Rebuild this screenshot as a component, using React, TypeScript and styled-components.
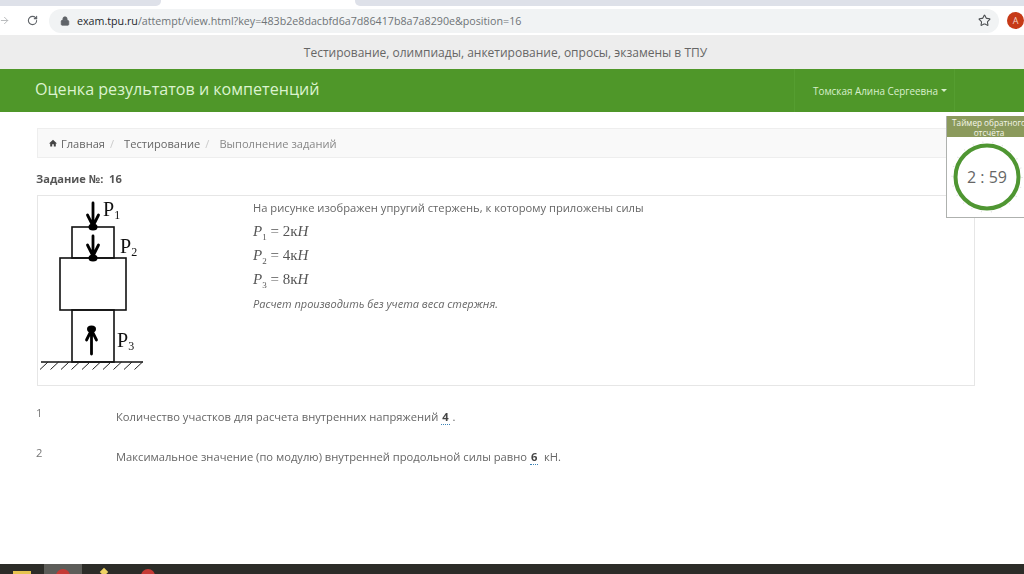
import styled, { createGlobalStyle } from 'styled-components';
import { ArrowRight, RotateCw, Lock, Star } from 'lucide-react';

const GlobalStyle = createGlobalStyle`
    html, body {
        margin: 0;
        padding: 0;
        background: #fff;
    }
    body {
        font-family: "Open Sans", "Liberation Sans", sans-serif;
        color: #555;
    }
`;

function Diagram() {
    const hatch = [];
    for (let x = 48; x <= 146; x += 10.5) {
        hatch.push(<line key={x} x1={x} y1={362} x2={x - 8} y2={369.500} stroke="#222" strokeWidth="1" />);
    }
    return (
        <DiagramSvg width="216" height="189" viewBox="37 196 216 189" fill="none">
            <g stroke="#111" strokeWidth="1.6">
                <rect x="72" y="227" width="42" height="31" />
                <rect x="60" y="258" width="66" height="52" />
                <rect x="72" y="310" width="42" height="52" />
                <line x1="41" y1="362" x2="143" y2="362" />
            </g>
            {hatch}
            <g stroke="#000" strokeWidth="2.800" strokeLinecap="round">
                <path d="M93 203V226M87.500 215L93 226L98.500 215" />
                <path d="M93 236V256M87.500 245L93 256L98.500 245" />
                <path d="M91.500 354V330M86.500 340L91.500 330L96.500 340" />
            </g>
            <g fill="#000">
                <ellipse cx="93" cy="227" rx="4.500" ry="3.500" />
                <ellipse cx="93" cy="258" rx="4.500" ry="3.500" />
                <ellipse cx="91.500" cy="329" rx="4.500" ry="3.500" />
            </g>
            <DiagramLabel x="103" y="216">P<tspan fontSize="12" dy="3">1</tspan></DiagramLabel>
            <DiagramLabel x="120" y="253">P<tspan fontSize="12" dy="3">2</tspan></DiagramLabel>
            <DiagramLabel x="117" y="347">P<tspan fontSize="12" dy="3">3</tspan></DiagramLabel>
        </DiagramSvg>
    );
}

function Formula({ n, value }: { n: number; value: number }) {
    return (
        <FormulaLine>
            <i>P</i><sub>{n}</sub> = {value}к<i>H</i>
        </FormulaLine>
    );
}

function App() {
    return (
        <Page>
            <GlobalStyle />
            <TabStrip>
                <Tab />
                <ActiveTab />
                <Tab $grow />
            </TabStrip>
            <Toolbar>
                <ForwardIcon size={15} />
                <ReloadIcon size={15} strokeWidth={2.4} />
                <AddressBar>
                    <Lock size={10} fill="#5f6368" color="#5f6368" />
                    <Url><b>exam.tpu.ru</b>/attempt/view.html?key=483b2e8dacbfd6a7d86417b8a7a8290e&position=16</Url>
                    <StarIcon size={13} />
                </AddressBar>
                <Avatar>A</Avatar>
            </Toolbar>
            <Banner>Тестирование, олимпиады, анкетирование, опросы, экзамены в ТПУ</Banner>
            <Navbar>
                <Brand>Оценка результатов и компетенций</Brand>
                <UserMenu>Томская Алина Сергеевна<Caret /></UserMenu>
            </Navbar>
            <Content>
                <Breadcrumb>
                    <HomeIcon viewBox="0 0 10 10"><path d="M5 1L0 5.500H1.500V9.500H4V6.500H6V9.500H8.500V5.500H10Z" /></HomeIcon>
                    <Crumb>Главная</Crumb>
                    <Sep>/</Sep>
                    <Crumb>Тестирование</Crumb>
                    <Sep>/</Sep>
                    <Crumb $active>Выполнение заданий</Crumb>
                </Breadcrumb>
                <TaskTitle>Задание №:&nbsp; 16</TaskTitle>
                <TaskPanel>
                    <Diagram />
                    <TaskText>
                        <Line>На рисунке изображен упругий стержень, к которому приложены силы</Line>
                        <Formula n={1} value={2} />
                        <Formula n={2} value={4} />
                        <Formula n={3} value={8} />
                        <Note>Расчет производить без учета веса стержня.</Note>
                    </TaskText>
                </TaskPanel>
                <Answers>
                    <AnswerRow>
                        <AnswerNum>1</AnswerNum>
                        <AnswerText>Количество участков для расчета внутренних напряжений <Value>4</Value> .</AnswerText>
                    </AnswerRow>
                    <AnswerRow>
                        <AnswerNum>2</AnswerNum>
                        <AnswerText>Максимальное значение (по модулю) внутренней продольной силы равно <Value>6</Value>&nbsp; кН.</AnswerText>
                    </AnswerRow>
                </Answers>
            </Content>
            <Taskbar>
                <TaskbarItem><Folder /></TaskbarItem>
                <TaskbarItem $active><RedDot /></TaskbarItem>
                <TaskbarItem><YellowTip /></TaskbarItem>
                <TaskbarItem><RedDot /></TaskbarItem>
            </Taskbar>
            <Timer>
                <TimerHead>Таймер обратного отсчёта</TimerHead>
                <TimerBody>
                    <svg width="72" height="72" viewBox="0 0 72 72" fill="none">
                        <circle cx="36" cy="36" r="35" stroke="#e2e2e2" strokeWidth="1.500" strokeDasharray="1 9" />
                        <circle cx="36" cy="36" r="31.500" stroke="#4f9632" strokeWidth="4" />
                    </svg>
                    <TimerValue>2 : 59</TimerValue>
                </TimerBody>
            </Timer>
        </Page>
    );
}

export default App

// the reference is a soft, rescaled photo of a screen
const Page = styled.div`
    position: relative;
    display: flex;
    flex-direction: column;
    width: 1024px;
    height: 574px;
    overflow: hidden;
    filter: blur(0.3px);
`

const TabStrip = styled.div`
    display: flex;
    height: 6px;
    background: #fff;
`

const Tab = styled.div<{ $grow?: boolean }>`
    flex: ${p => (p.$grow ? '1' : '0 0 161px')};
    background: #dee1e9;
    border-radius: ${p => (p.$grow ? '0 0 0 5px' : '0 0 5px 0')};
`

const ActiveTab = styled.div`
    flex: 0 0 194px;
    background: #fff;
`

const Toolbar = styled.div`
    display: flex;
    align-items: center;
    height: 29px;
    background: #fff;
    position: relative;
`

const ForwardIcon = styled(ArrowRight)`
    color: #b4b6b8;
    margin-left: -1px;
`

const ReloadIcon = styled(RotateCw)`
    color: #5f6368;
    margin-left: 17px;
`

const AddressBar = styled.div`
    display: flex;
    flex: 0 0 950px;
    align-items: center;
    height: 24px;
    margin-left: 11px;
    padding: 0 7px 0 11px;
    box-sizing: border-box;
    background: #f1f3f4;
    border-radius: 12px;
`

const Url = styled.div`
    flex: 1;
    margin-left: 7px;
    font-size: 10.7px;
    color: #6f7377;
    white-space: nowrap;

    b {
        font-weight: 400;
        color: #24282c;
    }
`

const StarIcon = styled(Star)`
    color: #4a4d50;
    margin-right: 1px;
`

const Avatar = styled.div`
    width: 17px;
    height: 17px;
    margin-left: 8px;
    flex: none;
    border-radius: 50%;
    background: #c63a17;
    color: #f5d5c8;
    font-size: 9px;
    line-height: 17px;
    text-align: center;
`

const Banner = styled.div`
    height: 34px;
    line-height: 35px;
    text-align: center;
    background: #ededed;
    font-size: 12px;
    color: #666;
    padding-right: 13px;
`

const Navbar = styled.div`
    display: flex;
    justify-content: space-between;
    align-items: center;
    height: 43px;
    padding-left: 35px;
    background: #4f9729;
`

const Brand = styled.div`
    font-size: 16.1px;
    color: #dcf3cf;
    margin-top: -3px;
`

const UserMenu = styled.div`
    display: flex;
    align-items: center;
    height: 100%;
    box-sizing: border-box;
    width: 161px;
    margin-right: 69px;
    padding-left: 18px;
    border-left: 1px solid #559e30;
    border-right: 1px solid #559e30;
    font-size: 9.9px;
    color: #d8efcb;
    white-space: nowrap;
`

const Caret = styled.span`
    margin-left: 3px;
    border-top: 3px solid #d8efcb;
    border-left: 3px solid transparent;
    border-right: 3px solid transparent;
`

const Content = styled.div`
    flex: 1;
    padding: 16px 49px 0 37px;
`

const Breadcrumb = styled.div`
    display: flex;
    align-items: center;
    height: 30px;
    padding-left: 11px;
    box-sizing: border-box;
    background: #f9f9f9;
    border: 1px solid #eee;
    font-size: 11.1px;
`

const HomeIcon = styled.svg`
    width: 8px;
    height: 8px;
    margin-right: 4px;
    fill: #444;
`

const Crumb = styled.span<{ $active?: boolean }>`
    color: ${p => (p.$active ? '#888' : '#666')};
`

const Sep = styled.span`
    margin: 0 10px 0 5px;
    color: #ccc;
`

const TaskTitle = styled.div`
    margin: 12px 0 8px -1px;
    height: 17px;
    line-height: 17px;
    font-size: 11.1px;
    font-weight: 700;
    color: #555;
`

const TaskPanel = styled.div`
    display: flex;
    height: 191px;
    box-sizing: border-box;
    border: 1px solid #e6e6e6;
`

const DiagramSvg = styled.svg`
    margin-left: -1px;
    flex: none;
`

const DiagramLabel = styled.text`
    font-family: "Liberation Serif", serif;
    font-size: 20px;
    fill: #111;
`

const TaskText = styled.div`
    padding-top: 3px;
    font-size: 11.2px;
    color: #666;
`

const Line = styled.div`
    height: 20px;
    line-height: 18px;
`

const FormulaLine = styled.div`
    height: 24px;
    line-height: 24px;
    font-family: "Liberation Serif", serif;
    font-size: 15px;
    color: #555;

    sub {
        font-size: 9px;
        line-height: 0;
    }
`

const Note = styled.div`
    margin-top: 4px;
    line-height: 18px;
    font-size: 11px;
    font-style: italic;
    color: #666;
`

const Answers = styled.div`
    padding-top: 19px;
`

const AnswerRow = styled.div`
    display: flex;
    height: 40px;
    font-size: 11.2px;
    color: #666;
`

const AnswerNum = styled.div`
    flex: 0 0 79px;
    margin-left: -1px;
    padding-right: 1px;
    line-height: 16px;
    color: #777;
`

const AnswerText = styled.div`
    line-height: 18px;
    padding-top: 3px;
`

const Value = styled.b`
    color: #444;
    border-bottom: 1px dotted #3b82b5;
    padding: 0 1px;
`

const Taskbar = styled.div`
    display: flex;
    height: 10px;
    background: #2c2c28;
    overflow: hidden;
`

const TaskbarItem = styled.div<{ $active?: boolean }>`
    display: flex;
    justify-content: center;
    flex: 0 0 ${p => (p.$active ? '38px' : '43px')};
    padding-top: 7px;
    margin-right: ${p => (p.$active ? '0' : '1px')};
    background: ${p => (p.$active ? '#5d5d59' : 'transparent')};
`

const Folder = styled.div`
    width: 18px;
    height: 6px;
    background: #e6c34f;
`

const RedDot = styled.div`
    width: 14px;
    height: 14px;
    border-radius: 50%;
    background: #c53a35;
    margin-top: -2px;
`

const YellowTip = styled.div`
    width: 6px;
    height: 6px;
    background: #eed264;
    transform: rotate(45deg);
    margin-top: -2px;
`

const Timer = styled.div`
    position: absolute;
    left: 946px;
    top: 116px;
    width: 86px;
    height: 102px;
    box-sizing: border-box;
    background: #fff;
    border: 1px solid #aeb1ae;
    border-top: 0;
`

const TimerHead = styled.div`
    height: 21px;
    padding-top: 2px;
    box-sizing: border-box;
    background: #8b9a5c;
    color: #f4f6ea;
    font-size: 8.2px;
    line-height: 9.5px;
    text-align: center;
`

const TimerBody = styled.div`
    position: relative;
    display: flex;
    align-items: center;
    justify-content: center;
    height: 80px;
    margin-right: 4px;
`

const TimerValue = styled.div`
    position: absolute;
    inset: 0;
    display: flex;
    align-items: center;
    justify-content: center;
    font-size: 16px;
    color: #666;
`
